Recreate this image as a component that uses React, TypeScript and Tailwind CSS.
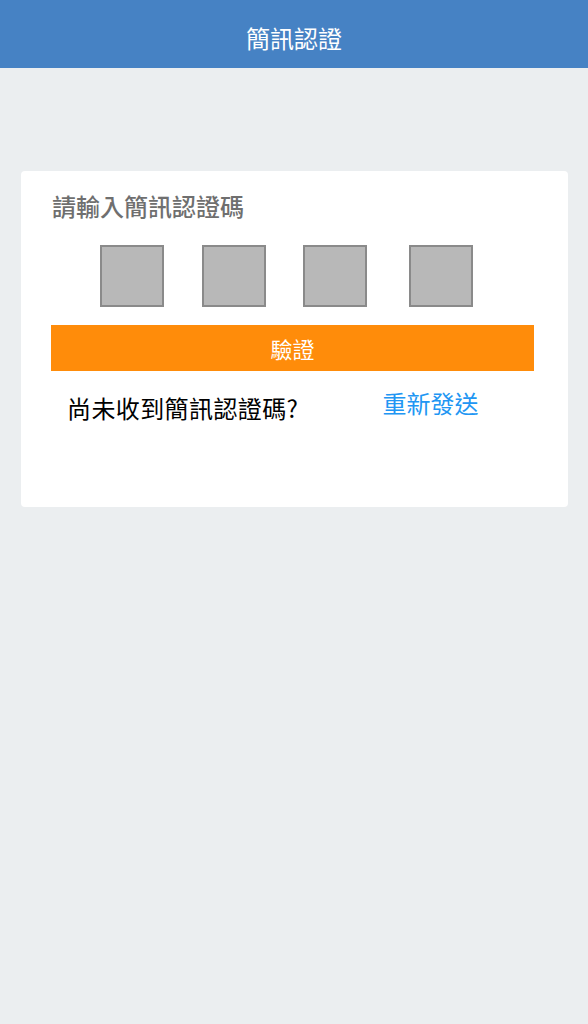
export default function App() {
  const font = { fontFamily: '"Noto Sans CJK TC", "Noto Sans", sans-serif' };
  return (
    <div className="min-h-[1024px] w-full bg-[#ebeef0]" style={font}>
      <div className="flex h-[68px] items-center justify-center bg-[#4682c4] pt-[8px]">
        <span className="text-[24px] leading-[30px] text-white">簡訊認證</span>
      </div>
      <div className="px-[21px] pt-[103px]">
        <div className="flex h-[336px] w-[547px] flex-col rounded-[4px] bg-white">
          <div className="pl-[31px] pt-[19px] text-[24px] leading-[32px] font-medium text-[#6f6f6f]">
            請輸入簡訊認證碼
          </div>
          <div className="mt-[23px] flex">
            <div className="ml-[79px] h-[62px] w-[64px] border-2 border-[#8a8a8a] bg-[#b8b8b8]" />
            <div className="ml-[38px] h-[62px] w-[64px] border-2 border-[#8a8a8a] bg-[#b8b8b8]" />
            <div className="ml-[37px] h-[62px] w-[64px] border-2 border-[#8a8a8a] bg-[#b8b8b8]" />
            <div className="ml-[42px] h-[62px] w-[64px] border-2 border-[#8a8a8a] bg-[#b8b8b8]" />
          </div>
          <div className="ml-[30px] mt-[18px] flex h-[46px] w-[483px] items-center justify-center bg-[#ff8c0a]">
            <span className="text-[22px] leading-[30px] text-white">驗證</span>
          </div>
          <div className="mt-[16px] flex items-start">
            <span className="ml-[46px] pt-[5px] text-[24px] leading-[32px] tracking-[0.4px] text-black">尚未收到簡訊認證碼?</span>
            <span className="ml-[84px] text-[24px] leading-[32px] text-[#2196f3]">重新發送</span>
          </div>
        </div>
      </div>
    </div>
  );
}
